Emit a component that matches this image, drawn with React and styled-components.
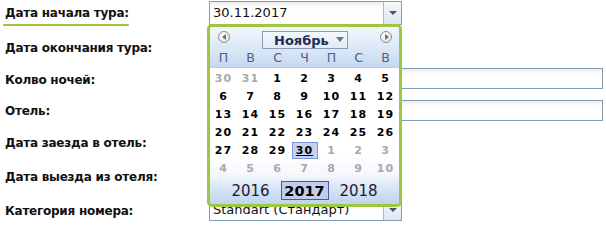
import React from "react";
import styled, { createGlobalStyle } from "styled-components";

const Global = createGlobalStyle`
  html, body { margin: 0; padding: 0; background: #fff; }
  body { width: 606px; height: 228px; overflow: hidden; font-family: "DejaVu Sans", Verdana, sans-serif; }
`;

const Form = styled.div`
  display: flex;
  flex-direction: column;
  width: 606px;
`;

const Row = styled.div`
  display: flex;
  align-items: ${(p) => p.$align || "center"};
  height: ${(p) => p.$h}px;
  margin-top: ${(p) => p.$mt || 0}px;
`;

const Label = styled.div`
  position: relative;
  width: 204px;
  padding-left: 5px;
  font-size: 12px;
  font-weight: bold;
  letter-spacing: -0.25px;
  color: #111;
  white-space: nowrap;
  margin-top: ${(p) => p.$dy || 0}px;
  ${(p) =>
    p.$focus &&
    `&::after {
      content: "";
      position: absolute;
      left: 3px;
      width: 126px;
      bottom: -6px;
      height: 2px;
      border-radius: 1px;
      background: #9cc63e;
    }`}
`;

const Field = styled.div`
  position: relative;
  width: ${(p) => p.$w}px;
  height: ${(p) => p.$fh || 23}px;
  box-sizing: border-box;
  border: 1px solid #7f9db9;
  background: linear-gradient(#eeeeee 0, #fdfdfd 5px, #ffffff 100%);
  display: flex;
  align-items: center;
`;

const FieldText = styled.span`
  flex: 1;
  padding-left: 3px;
  font-size: 13px;
  color: #111;
  white-space: nowrap;
  overflow: hidden;
`;

const DropButton = styled.div`
  width: 17px;
  height: 100%;
  border-left: 1px solid #a8b9cf;
  background: linear-gradient(#f4f7fb, #dfe7f1);
  display: flex;
  align-items: center;
  justify-content: center;
  &::before {
    content: "";
    border-left: 4px solid transparent;
    border-right: 4px solid transparent;
    border-top: 4px solid #4d5666;
  }
`;

const Popup = styled.div`
  position: absolute;
  left: -3px;
  top: 22px;
  width: 195px;
  height: 183px;
  box-sizing: border-box;
  border: 3px solid #9dc73f;
  border-radius: 5px;
  background: #fff;
  display: flex;
  flex-direction: column;
  overflow: hidden;
  z-index: 5;
`;

const Head = styled.div`
  background: linear-gradient(#f3f7fd, #dbe7f6 55%, #c6d9f1);
  border-bottom: 1px solid #b9cde8;
`;

const NavRow = styled.div`
  height: 22px;
  display: flex;
  align-items: center;
  justify-content: space-between;
  padding: 0 7px 0 8px;
`;

const NavBtn = styled.div`
  width: 10px;
  height: 10px;
  border-radius: 50%;
  border: 1px solid #8c8c8c;
  background: radial-gradient(circle at 40% 35%, #ffffff, #dcdcdc);
  display: flex;
  align-items: center;
  justify-content: center;
  margin-top: -1px;
  &::before {
    content: "";
    border-top: 3px solid transparent;
    border-bottom: 3px solid transparent;
    ${(p) =>
      p.$dir === "left"
        ? "border-right: 4px solid #6f6f6f; margin-right: 1px;"
        : "border-left: 4px solid #6f6f6f; margin-left: 1px;"}
  }
`;

const MonthBox = styled.div`
  box-sizing: border-box;
  width: 86px;
  height: 18px;
  border: 1px solid #8a9ab8;
  background: linear-gradient(#f4f8fd, #e1eaf6);
  display: flex;
  align-items: center;
  padding-left: 11px;
  position: relative;
  margin-top: 5px;
  font-size: 13px;
  font-weight: bold;
  color: #1d2b58;
  &::after {
    content: "";
    position: absolute;
    right: 3px;
    top: 5px;
    border-left: 4px solid transparent;
    border-right: 4px solid transparent;
    border-top: 5px solid #6d7280;
  }
`;

const Grid = styled.div`
  display: grid;
  grid-template-columns: repeat(7, 27px);
  grid-auto-rows: ${(p) => p.$rh}px;
  padding-top: ${(p) => p.$pt || 0}px;
`;

const WeekDay = styled.div`
  display: flex;
  align-items: center;
  justify-content: center;
  font-size: 12.5px;
  color: #4b5c88;
`;

const Body = styled.div`
  height: 110px;
  background: linear-gradient(#ffffff 80%, #f2f5fa);
`;

const Day = styled.div`
  display: flex;
  align-items: center;
  justify-content: center;
  font-size: 11px;
  font-weight: bold;
  letter-spacing: 1px;
  color: ${(p) => (p.$other ? "#a9a9a9" : "#000")};
`;

const Selected = styled.span`
  box-sizing: border-box;
  width: 26px;
  height: 17px;
  display: flex;
  align-items: center;
  justify-content: center;
  border: 1px solid #7e97d6;
  background: #c5d3ef;
  text-decoration: underline;
`;

const Foot = styled.div`
  flex: 1;
  background: linear-gradient(#eaf1fb, #d3e2f4 50%, #bfd4ee);
  display: flex;
  align-items: center;
  justify-content: center;
  gap: 6px;
`;

const Year = styled.div`
  box-sizing: border-box;
  width: 48px;
  height: 19px;
  display: flex;
  align-items: center;
  justify-content: center;
  font-size: 15px;
  color: #1b1b33;
  ${(p) =>
    p.$sel &&
    `font-weight: bold;
     font-size: 14.5px;
     border: 1px solid #4b5aa6;
     background: #c3cdea;
     color: #000;`}
`;

const weekDays = ["П", "В", "С", "Ч", "П", "С", "В"];
const days = [
  [30, 1], [31, 1], [1], [2], [3], [4], [5],
  [6], [7], [8], [9], [10], [11], [12],
  [13], [14], [15], [16], [17], [18], [19],
  [20], [21], [22], [23], [24], [25], [26],
  [27], [28], [29], [30, 0, 1], [1, 1], [2, 1], [3, 1],
  [4, 1], [5, 1], [6, 1], [7, 1], [8, 1], [9, 1], [10, 1],
];

function Calendar() {
  return (
    <Popup>
      <Head>
        <NavRow>
          <NavBtn $dir="left" />
          <MonthBox>Ноябрь</MonthBox>
          <NavBtn $dir="right" />
        </NavRow>
        <Grid $rh={18}>
          {weekDays.map((d, i) => (
            <WeekDay key={i}>{d}</WeekDay>
          ))}
        </Grid>
      </Head>
      <Body>
        <Grid $rh={18} $pt={2}>
          {days.map(([n, other, sel], i) => (
            <Day key={i} $other={!!other}>
              {sel ? <Selected>{n}</Selected> : n}
            </Day>
          ))}
        </Grid>
      </Body>
      <Foot>
        <Year>2016</Year>
        <Year $sel>2017</Year>
        <Year>2018</Year>
      </Foot>
    </Popup>
  );
}

export default function App() {
  return (
    <>
      <Global />
      <Form>
        <Row $h={25}>
          <Label $focus>Дата начала тура:</Label>
          <Field $w={193} $fh={24}>
            <FieldText>30.11.2017</FieldText>
            <DropButton />
            <Calendar />
          </Field>
        </Row>
        <Row $h={43}>
          <Label $dy={2}>Дата окончания тура:</Label>
        </Row>
        <Row $h={21}>
          <Label $dy={3}>Колво ночей:</Label>
          <Field $w={394} $fh={21} />
        </Row>
        <Row $h={21} $mt={11}>
          <Label>Отель:</Label>
          <Field $w={394} $fh={21} />
        </Row>
        <Row $h={44}>
          <Label>Дата заезда в отель:</Label>
        </Row>
        <Row $h={24}>
          <Label>Дата выезда из отеля:</Label>
        </Row>
        <Row $h={30} $mt={9} $align="flex-start">
          <Label $dy={6}>Категория номера:</Label>
          <Field $w={193} $fh={23}>
            <FieldText>Standart (Стандарт)</FieldText>
            <DropButton />
          </Field>
        </Row>
      </Form>
    </>
  );
}
